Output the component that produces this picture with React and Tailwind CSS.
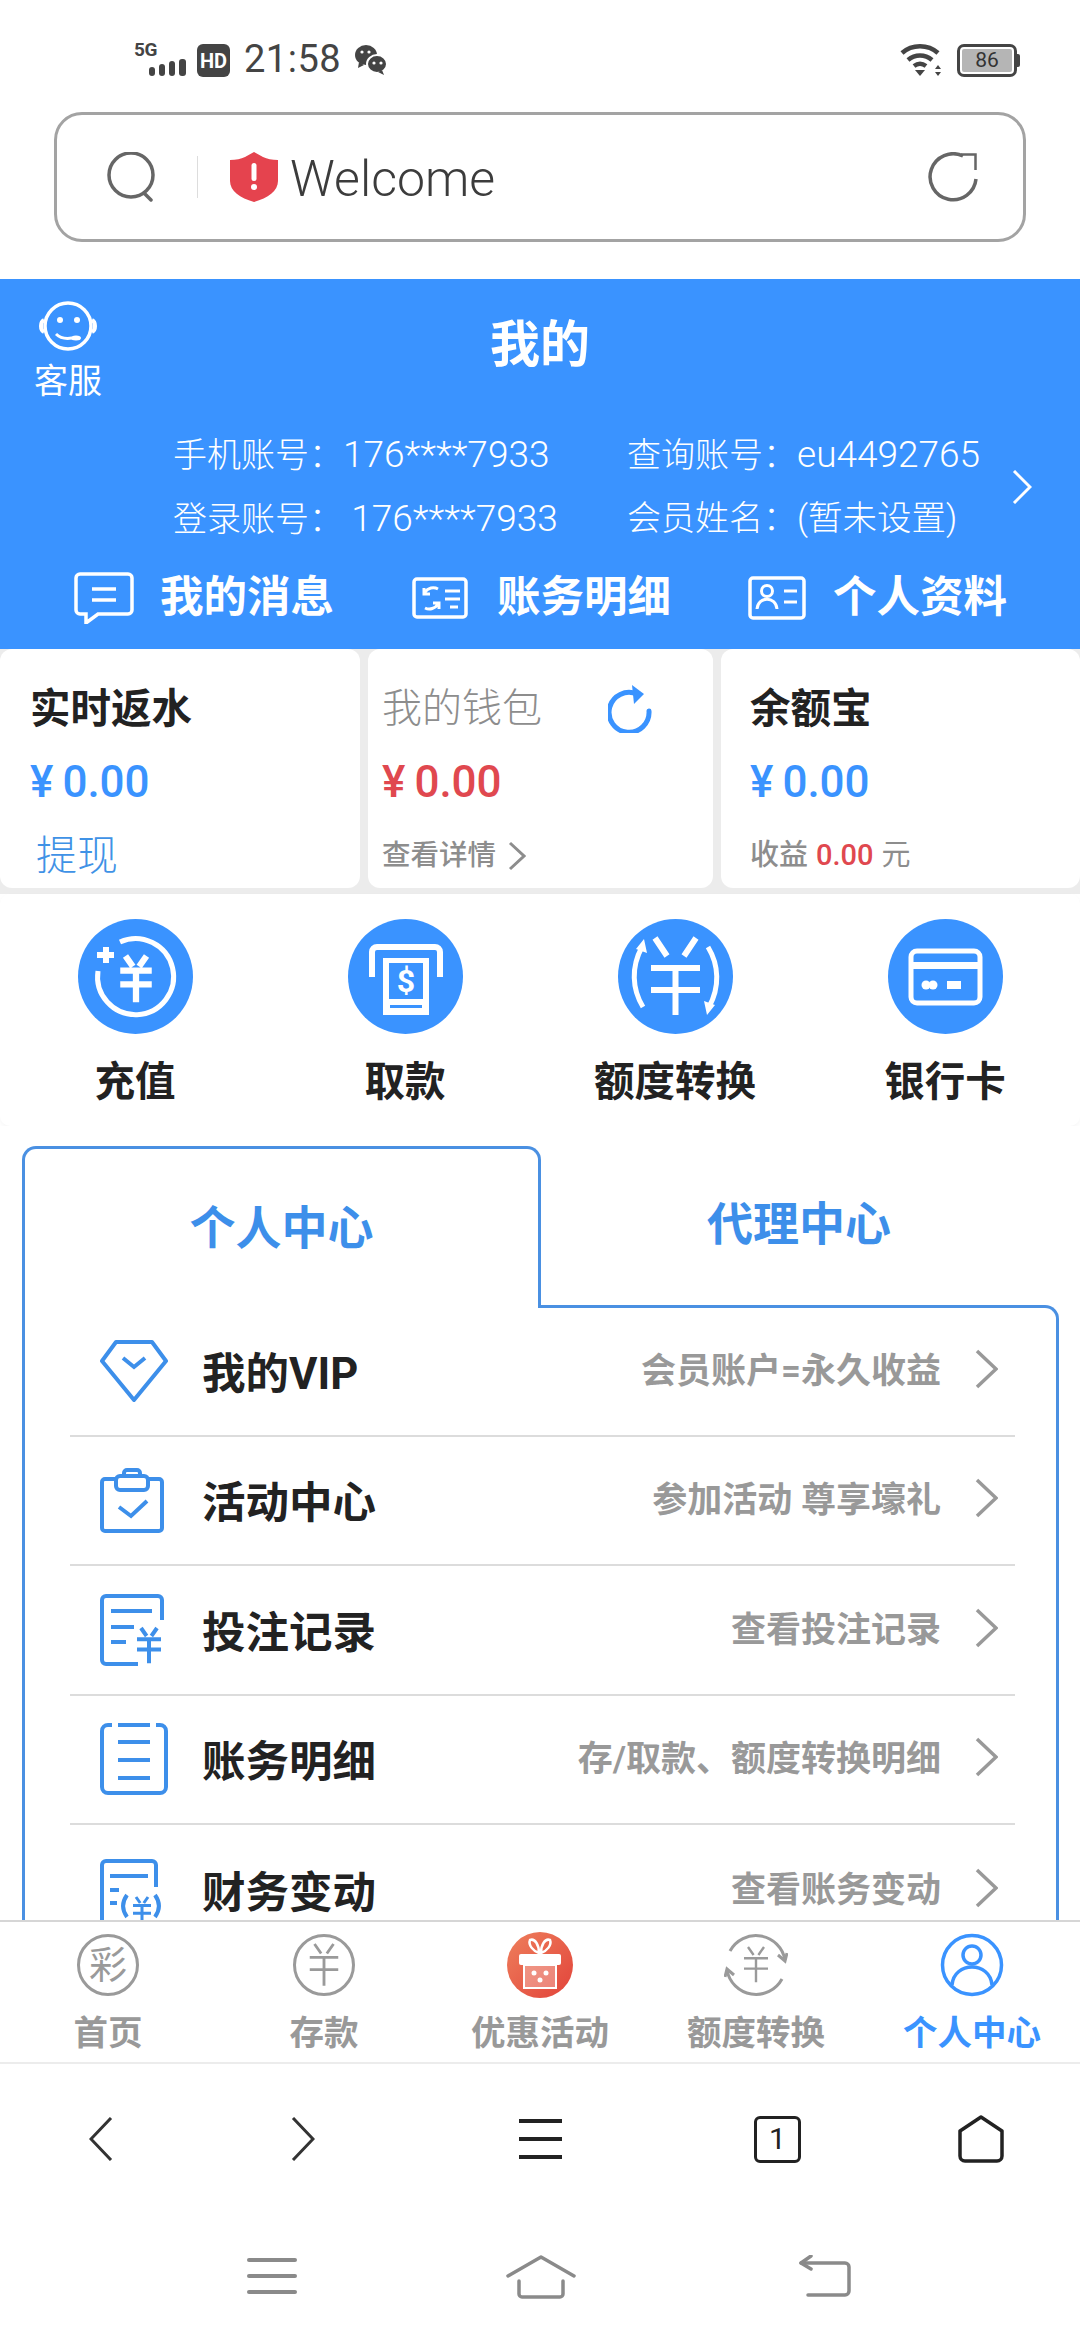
import React from 'react';

function StatusBar() {
  return (
    <div className="h-[112px] pt-[44px] flex items-start text-[#444]">
      {/* signal */}
      <div className="ml-[134px] w-[55px] h-[33px] relative">
        <span className="absolute left-0 -top-[6px] text-[19px] font-bold leading-[24px] tracking-[-0.5px]">5G</span>
        <svg width="40" height="17" viewBox="0 0 40 17" className="absolute left-[15px] top-[15px]" fill="#444">
          <rect x="0" y="8" width="6" height="9" rx="3" />
          <rect x="10" y="5" width="6" height="12" rx="3" />
          <rect x="20" y="2" width="6" height="15" rx="3" />
          <rect x="30" y="0" width="7" height="17" rx="3" />
        </svg>
      </div>
      <div className="ml-[8px] w-[33px] h-[33px] rounded-[6px] bg-[#444] text-white text-[20px] font-bold flex items-center justify-center leading-none">HD</div>
      <div className="ml-[14px] text-[38px] leading-[30px] tracking-[0.5px] font-normal">21:58</div>
      <svg width="34" height="32" viewBox="0 0 34 32" className="ml-[13px]" fill="#444">
        <ellipse cx="12" cy="11" rx="11" ry="10" />
        <path d="M5 18l-1 6 6-3z" />
        <ellipse cx="23" cy="20" rx="10" ry="9" stroke="#fff" strokeWidth="2" />
        <path d="M28 26l2 5-6-3z" />
        <circle cx="8" cy="8" r="1.6" fill="#fff" />
        <circle cx="15" cy="8" r="1.6" fill="#fff" />
        <circle cx="20" cy="19" r="1.6" fill="#fff" />
        <circle cx="27" cy="19" r="1.6" fill="#fff" />
      </svg>
      <div className="flex-1" />
      <svg width="44" height="32" viewBox="0 0 44 32" fill="none" stroke="#444" strokeWidth="4.5">
        <path d="M2 9c10-9 26-9 36 0" />
        <path d="M8 16c7-6 17-6 24 0" />
        <path d="M14 22c4-3 8-3 12 0" />
        <path d="M20 32l-5-6h10z" fill="#444" stroke="none" />
        <path d="M38 21l3 4h-6zM38 32l3-4h-6z" fill="#444" stroke="none" />
      </svg>
      <div className="ml-[13px] mr-[60px] flex items-center">
        <div className="w-[60px] h-[33px] rounded-[7px] border-[3px] border-[#444] p-[2px]">
          <div className="h-full bg-[#b5b5b5] rounded-[2px] text-[21px] leading-[23px] text-center text-[#333]">86</div>
        </div>
        <div className="w-[3px] h-[13px] bg-[#444] rounded-r-[2px]" />
      </div>
    </div>
  );
}

function SearchBar() {
  return (
    <div className="h-[167px] px-[54px] pb-[37px]">
      <div className="h-full rounded-[28px] border-[3.5px] border-[#a3a3a3] flex items-center pl-[49px] pr-[45px]">
        <svg width="52" height="50" viewBox="0 0 52 50" fill="none" stroke="#666" strokeWidth="3.5" strokeLinecap="round">
          <circle cx="25" cy="23" r="22" />
          <path d="M38 41l7 7" />
        </svg>
        <div className="ml-[39px] w-px h-[42px] bg-[#ddd]" />
        <svg width="48" height="50" viewBox="0 0 48 50" className="ml-[32px]">
          <path d="M24 0l9 5c4 2 9 3 15 3v21c0 10-10 17-24 21C10 46 0 39 0 29V8c6 0 11-1 15-3z" fill="#e5434e" />
          <rect x="21.5" y="11" width="5" height="18" rx="2.5" fill="#fff" />
          <circle cx="24" cy="35" r="3" fill="#fff" />
        </svg>
        <span className="ml-[12px] mt-[4px] text-[50px] leading-none font-light text-[#3c3c3c]">Welcome</span>
        <div className="flex-1" />
        <svg width="50" height="50" viewBox="0 0 50 50" fill="none" stroke="#666" strokeWidth="3.5">
          <path d="M35 4A23 23 0 1 0 48 27" />
          <path d="M33 2.5h14.5V18" strokeWidth="2.5" />
        </svg>
      </div>
    </div>
  );
}

const accountInfo = [
  { label: '手机账号：', value: '176****7933' },
  { label: '查询账号：', value: 'eu4492765' },
  { label: '登录账号： ', value: '176****7933' },
  { label: '会员姓名：', value: '(暂未设置)', cjk: true },
];

function Header() {
  return (
    <div className="h-[370px] bg-[#3a93ff] text-white shrink-0">
      <div className="h-[150px] flex items-start">
        <div className="w-[136px] pt-[22px] flex flex-col items-center">
          <svg width="58" height="50" viewBox="0 0 58 50" fill="none" stroke="#fff" strokeWidth="3.5">
            <circle cx="29" cy="25" r="23" />
            <path d="M5 19c-4 2-4 10 0 12M53 19c4 2 4 10 0 12" strokeWidth="4" />
            <circle cx="21" cy="19" r="3" fill="#fff" stroke="none" />
            <circle cx="38" cy="19" r="3" fill="#fff" stroke="none" />
            <path d="M17 33c4 4 10 5 16 4" strokeWidth="3" />
            <ellipse cx="37" cy="37" rx="5" ry="2.5" fill="#fff" stroke="none" />
          </svg>
          <span className="mt-[8px] text-[34px] leading-[44px]">客服</span>
        </div>
        <div className="flex-1 pt-[38px] text-center text-[50px] leading-[56px] font-bold">我的</div>
        <div className="w-[136px]" />
      </div>
      <div className="flex items-center h-[104px] mt-[6px] pl-[173px]">
        <div className="grid grid-cols-[454px_auto] gap-y-[22px] text-[34px] leading-[41px] font-light w-[830px]">
          {accountInfo.map((item) => (
            <div key={item.label} className="whitespace-pre">
              {item.label}
              <span className={item.cjk ? 'text-[34.5px]' : 'text-[37px]'}>{item.value}</span>
            </div>
          ))}
        </div>
        <svg width="20" height="34" viewBox="0 0 20 34" className="ml-[9px]" fill="none" stroke="#fff" strokeWidth="3">
          <path d="M2 1l16 16L2 33" />
        </svg>
      </div>
      <div className="mt-[31px] flex items-center font-bold text-[43.5px] leading-[56px]">
        <svg width="60" height="52" viewBox="0 0 60 52" className="ml-[74px]" fill="none" stroke="#fff" strokeWidth="3.5">
          <path d="M6 2h48a4 4 0 0 1 4 4v32a4 4 0 0 1-4 4H24L12 51v-9H6a4 4 0 0 1-4-4V6a4 4 0 0 1 4-4z" />
          <path d="M18 17h24M18 28h24" />
        </svg>
        <span className="ml-[26px]">我的消息</span>
        <svg width="56" height="42" viewBox="0 0 56 42" className="ml-[78px]" fill="none" stroke="#fff" strokeWidth="3.5">
          <rect x="2" y="2" width="52" height="38" rx="3" />
          <path d="M26 12a10 10 0 0 0-13 3M13 31a10 10 0 0 0 13-4M12 11v6h6M27 32v-6h-6" strokeWidth="3" />
          <path d="M33 14h15M33 22h15M38 30h8" strokeWidth="3" />
        </svg>
        <span className="ml-[29px]">账务明细</span>
        <svg width="58" height="44" viewBox="0 0 58 44" className="ml-[77px]" fill="none" stroke="#fff" strokeWidth="3.5">
          <rect x="2" y="2" width="54" height="40" rx="3" />
          <circle cx="19" cy="15" r="5.5" strokeWidth="3" />
          <path d="M9 33c1-13 19-13 20 0" strokeWidth="3" />
          <path d="M36 15h13M36 26h13" strokeWidth="3" />
        </svg>
        <span className="ml-[27px]">个人资料</span>
      </div>
    </div>
  );
}

function Chevron({ w = 18, h = 30, color = '#999', sw = 3, className = '' }) {
  return (
    <svg width={w} height={h} viewBox={`0 0 ${w} ${h}`} fill="none" stroke={color} strokeWidth={sw} className={className}>
      <path d={`M2 2L${w - 2} ${h / 2}L2 ${h - 2}`} />
    </svg>
  );
}

function Amount({ color }) {
  return (
    <div className={`mt-[22px] h-[50px] flex text-[44px] leading-[50px] font-medium ${color}`}>
      <span className="mr-[9px]">¥</span>
      <span>0.00</span>
    </div>
  );
}

function WalletCards() {
  return (
    <div className="bg-[#ececec] shrink-0 h-[245px] pb-[6px] flex gap-[8px]">
      <div className="w-[360px] bg-white rounded-[12px] pl-[30px] flex flex-col">
        <div className="mt-[34px] h-[52px] text-[40.5px] leading-[52px] font-bold text-[#222]">实时返水</div>
        <Amount color="text-[#3a93ff]" />
        <div className="mt-[24px] ml-[6px] text-[41px] leading-[50px] text-[#3f92e6] font-light">提现</div>
      </div>
      <div className="w-[345px] bg-white rounded-[12px] pl-[14px] flex flex-col">
        <div className="mt-[34px] h-[52px] flex items-center">
          <span className="w-[162px] text-[40px] leading-[52px] font-light text-[#8d8d8d]">我的钱包</span>
          <svg width="44" height="48" viewBox="0 0 44 48" className="ml-[64px]" fill="none" stroke="#3a93ff" strokeWidth="5">
            <path d="M29 9A20 20 0 1 0 41 26" strokeLinecap="round" />
            <path d="M24 0l12 9-10 10z" fill="#3a93ff" stroke="none" />
          </svg>
        </div>
        <Amount color="text-[#e0484f]" />
        <div className="mt-[24px] h-[50px] flex items-center">
          <span className="text-[28.5px] font-medium text-[#8d8d8d]">查看详情</span>
          <Chevron w={18} h={30} className="ml-[12px]" color="#8d8d8d" />
        </div>
      </div>
      <div className="flex-1 bg-white rounded-[12px] pl-[29px] flex flex-col">
        <div className="mt-[34px] h-[52px] text-[40.5px] leading-[52px] font-bold text-[#222]">余额宝</div>
        <Amount color="text-[#3a93ff]" />
        <div className="mt-[24px] h-[50px] flex items-center text-[29px] text-[#8d8d8d]">
          <span className="font-medium">收益</span>
          <span className="ml-[8px] font-medium text-[#e0484f]">0.00</span>
          <span className="ml-[8px]">元</span>
        </div>
      </div>
    </div>
  );
}

function YenMark({ x, y, s = 1, sw = 4, color = '#fff' }) {
  return (
    <path
      transform={`translate(${x} ${y}) scale(${s})`}
      d="M-10 -20L-3 -10M10 -20L3 -10M-15 -6H15M-15 7H15M0 -6V24"
      fill="none"
      stroke={color}
      strokeWidth={sw}
    />
  );
}

function ActionIcon({ type }) {
  return (
    <svg width="115" height="115" viewBox="0 0 115 115">
      <circle cx="57.5" cy="57.5" r="57.5" fill="#3a93ff" />
      {type === 'deposit' && (
        <g fill="none" stroke="#fff" strokeWidth="5">
          <path d="M42 23A38 38 0 1 1 20 52" />
          <path d="M19 36h17M28 28v16" strokeWidth="6" />
          <YenMark x={58} y={58} s={1.05} sw={6} />
        </g>
      )}
      {type === 'withdraw' && (
        <g>
          <path d="M24 58V33a5 5 0 0 1 5-5h58a5 5 0 0 1 5 5v25" fill="none" stroke="#fff" strokeWidth="6" />
          <rect x="35" y="39" width="46" height="57" fill="#fff" />
          <rect x="41" y="44" width="34" height="36" fill="#3a93ff" />
          <text x="58" y="73" textAnchor="middle" fontSize="32" fontWeight="700" fill="#fff" fontFamily="Roboto, sans-serif">$</text>
          <rect x="42" y="86" width="32" height="3" fill="#3a93ff" />
        </g>
      )}
      {type === 'transfer' && (
        <g fill="none" stroke="#fff" strokeWidth="5">
          <path d="M37 19L49 37M78 19L66 37M33 49H82M33 71H82M57.5 49V96" strokeWidth="6" />
          <path d="M24 28C13 48 14 70 25 88" />
          <path d="M91 88C102 68 101 46 90 28" />
          <path d="M26 20l3 14-11-4zM89 96l-3-14 11 4z" fill="#fff" stroke="none" />
        </g>
      )}
      {type === 'card' && (
        <g>
          <rect x="23" y="32" width="69" height="52" rx="6" fill="none" stroke="#fff" strokeWidth="5" />
          <rect x="25" y="43" width="65" height="7" fill="#fff" />
          <circle cx="38" cy="66" r="4.5" fill="#fff" />
          <circle cx="45" cy="66" r="4.5" fill="#fff" />
          <rect x="59" y="62" width="14" height="8" fill="#fff" />
        </g>
      )}
    </svg>
  );
}

const actions = [
  { type: 'deposit', label: '充值' },
  { type: 'withdraw', label: '取款' },
  { type: 'transfer', label: '额度转换' },
  { type: 'card', label: '银行卡' },
];

function Actions() {
  return (
    <div className="bg-white shrink-0 h-[232px] pt-[25px] grid grid-cols-4 rounded-[10px] shadow-[0_2px_4px_rgba(0,0,0,0.04)]">
      {actions.map((a) => (
        <div key={a.type} className="flex flex-col items-center">
          <ActionIcon type={a.type} />
          <span className="mt-[22px] text-[40.5px] leading-[52px] font-bold text-[#222]">{a.label}</span>
        </div>
      ))}
    </div>
  );
}

function RowIcon({ type }) {
  const p = { fill: 'none', stroke: '#3d8fea', strokeWidth: 4 };
  if (type === 'vip') {
    return (
      <svg width="68" height="64" viewBox="0 0 68 64" {...p}>
        <path d="M16 3h36l14 19-32 39L2 22z" strokeLinejoin="round" />
        <path d="M23 19l11 9 11-9" />
      </svg>
    );
  }
  if (type === 'activity') {
    return (
      <svg width="64" height="66" viewBox="0 0 64 66" {...p}>
        <path d="M15 12H5a3 3 0 0 0-3 3v46a3 3 0 0 0 3 3h54a3 3 0 0 0 3-3V15a3 3 0 0 0-3-3H49" />
        <rect x="16" y="9" width="32" height="14" rx="4" />
        <path d="M24 9V6a3 3 0 0 1 3-3h10a3 3 0 0 1 3 3v3" />
        <path d="M19 40l12 9 16-15" />
      </svg>
    );
  }
  if (type === 'bet') {
    return (
      <svg width="64" height="72" viewBox="0 0 64 72" {...p}>
        <path d="M38 70H6a4 4 0 0 1-4-4V6a4 4 0 0 1 4-4h52a4 4 0 0 1 4 4v20" />
        <path d="M11 17h41M11 33h23M11 48h15" />
        <YenMark x={49} y={50} s={0.8} sw={5} color="#3d8fea" />
      </svg>
    );
  }
  if (type === 'bill') {
    return (
      <svg width="68" height="72" viewBox="0 0 68 72" {...p}>
        <path d="M12 2H8a6 6 0 0 0-6 6v56a6 6 0 0 0 6 6h52a6 6 0 0 0 6-6V8a6 6 0 0 0-6-6h-4" />
        <path d="M18 2h32M18 19h32M18 37h32M18 55h32" />
      </svg>
    );
  }
  return (
    <svg width="62" height="62" viewBox="0 0 62 62" {...p} className="overflow-visible">
      <path d="M2 62V6a4 4 0 0 1 4-4h46a4 4 0 0 1 4 4v22" />
      <path d="M10 17h38M10 31h9M10 44h7" />
      <YenMark x={42} y={50} s={0.6} sw={5} color="#3d8fea" />
      <path d="M27 36c-5 7-5 15 0 22M55 36c5 7 5 15 0 22" />
    </svg>
  );
}

const rows = [
  { type: 'vip', title: '我的VIP', sub: '会员账户=永久收益' },
  { type: 'activity', title: '活动中心', sub: '参加活动 尊享壕礼' },
  { type: 'bet', title: '投注记录', sub: '查看投注记录' },
  { type: 'bill', title: '账务明细', sub: '存/取款、额度转换明细' },
  { type: 'change', title: '财务变动', sub: '查看账务变动' },
];

function CenterTabs() {
  return (
    <div className="flex-1 min-h-0 overflow-hidden bg-white pt-[20px]">
      <div className="flex pl-[22px]">
        <div className="relative z-10 w-[519px] h-[162px] -mb-[3px] bg-white border-[3px] border-b-0 border-[#4a90e2] rounded-t-[14px] pt-[54px] text-center text-[46px] leading-[50px] font-bold text-[#3d8fea]">
          个人中心
        </div>
        <div className="w-[516px] pt-[53px] text-center text-[46px] leading-[50px] font-bold text-[#3d8fea]">代理中心</div>
      </div>
      <div className="ml-[22px] w-[1037px] border-[3px] border-b-0 border-[#4a90e2] rounded-tr-[14px] pl-[45px] pr-[41px]">
        <div className="-mt-[1px]">
          {rows.map((r, i) => (
            <div key={r.type} className={`h-[129.5px] flex items-center ${i < rows.length - 1 ? 'border-b-2 border-[#dcdcdc]' : ''}`}>
              <div className="w-[132px] pl-[30px] h-[72px] flex items-center">
                <RowIcon type={r.type} />
              </div>
              <span className="mt-[8px] text-[43.5px] leading-[56px] font-bold text-[#222]">{r.title}</span>
              <span className="mt-[2px] flex-1 text-right text-[35px] leading-[44px] font-semibold text-[#999]">{r.sub}</span>
              <Chevron w={23} h={40} sw={3.5} className="ml-[34px] mr-[17px] mb-[4px]" />
            </div>
          ))}
        </div>
      </div>
    </div>
  );
}

function NavIcon({ type }) {
  if (type === 'gift') {
    return (
      <svg width="66" height="66" viewBox="0 0 66 66">
        <defs>
          <linearGradient id="giftBg" x1="0" y1="0" x2="1" y2="1">
            <stop offset="0" stopColor="#ee7f5c" />
            <stop offset="1" stopColor="#e2433a" />
          </linearGradient>
        </defs>
        <circle cx="33" cy="33" r="33" fill="url(#giftBg)" />
        <path d="M32 21c-6-2-11-8-9-13 5-2 9 5 9 13zM34 21c6-2 11-8 9-13-5-2-9 5-9 13z" fill="none" stroke="#fff" strokeWidth="2.5" />
        <rect x="12" y="22" width="42" height="11" rx="2" fill="#fff" />
        <rect x="17" y="33" width="32" height="23" fill="#fff" fillOpacity="0.3" stroke="#fff" strokeWidth="2" />
        <circle cx="27" cy="41" r="2.5" fill="#fff" />
        <circle cx="39" cy="41" r="2.5" fill="#fff" />
        <circle cx="33" cy="48" r="2.5" fill="#fff" />
      </svg>
    );
  }
  if (type === 'user') {
    return (
      <svg width="64" height="64" viewBox="0 0 64 64" fill="none" stroke="#3a93ff" strokeWidth="3.5">
        <circle cx="32" cy="32" r="29.5" />
        <circle cx="32" cy="22" r="9" />
        <path d="M12 52c2-24 38-24 40 0" />
      </svg>
    );
  }
  return (
    <svg width="64" height="64" viewBox="0 0 64 64" fill="none" stroke="#9a9a9a" strokeWidth="3">
      {type === 'swap' ? (
        <g>
          <path d="M6 18A29.5 29.5 0 0 1 61 27M58 46A29.5 29.5 0 0 1 3 37" />
          <path d="M54 22l7 6 2-8M10 42l-7-6-2 8" />
        </g>
      ) : (
        <circle cx="32" cy="32" r="29.5" />
      )}
      {type === 'lottery' ? (
        <text x="32" y="45" textAnchor="middle" fontSize="38" fill="#9a9a9a" stroke="none" fontFamily="'Noto Sans CJK SC', sans-serif">彩</text>
      ) : (
        <YenMark x={32} y={30} s={type === 'swap' ? 0.8 : 0.95} sw={3} color="#9a9a9a" />
      )}
    </svg>
  );
}

const navItems = [
  { type: 'lottery', label: '首页' },
  { type: 'yen', label: '存款' },
  { type: 'gift', label: '优惠活动' },
  { type: 'swap', label: '额度转换' },
  { type: 'user', label: '个人中心', active: true },
];

function BottomNav() {
  return (
    <div className="shrink-0 h-[144px] bg-white border-t-2 border-b-2 border-t-[#d6d6d6] border-b-[#ececec] grid grid-cols-5">
      {navItems.map((n) => (
        <div key={n.type} className="flex flex-col items-center pt-[9px]">
          <div className="h-[68px] flex items-center">
            <NavIcon type={n.type} />
          </div>
          <span className={`mt-[12px] text-[34.5px] leading-[44px] font-semibold ${n.active ? 'text-[#3a93ff]' : 'text-[#999]'}`}>{n.label}</span>
        </div>
      ))}
    </div>
  );
}

function BrowserBar() {
  return (
    <div className="shrink-0 h-[150px] flex items-center">
      <svg width="24" height="44" viewBox="0 0 24 44" className="ml-[89px]" fill="none" stroke="#333" strokeWidth="3">
        <path d="M22 1L2 22l20 21" />
      </svg>
      <svg width="24" height="44" viewBox="0 0 24 44" className="ml-[178px]" fill="none" stroke="#333" strokeWidth="3">
        <path d="M2 1l20 21L2 43" />
      </svg>
      <div className="ml-[204px] w-[43px] flex flex-col gap-[14px]">
        <div className="h-[4px] bg-[#222]" />
        <div className="h-[4px] bg-[#222]" />
        <div className="h-[4px] bg-[#222]" />
      </div>
      <div className="ml-[192px] w-[47px] h-[47px] rounded-[6px] border-[3.5px] border-[#222] flex items-center justify-center text-[30px] font-normal leading-none text-[#222]">1</div>
      <svg width="46" height="48" viewBox="0 0 46 48" className="ml-[157px]" fill="none" stroke="#222" strokeWidth="3.5" strokeLinejoin="round">
        <path d="M23 2L44 16v25a5 5 0 0 1-5 5H7a5 5 0 0 1-5-5V16z" />
      </svg>
    </div>
  );
}

function SystemBar() {
  return (
    <div className="shrink-0 h-[126px] flex items-start pt-[41px]">
      <div className="ml-[247px] mt-[3px] w-[50px] flex flex-col gap-[12px]">
        <div className="h-[4px] rounded-full bg-[#8a8a8a]" />
        <div className="h-[4px] rounded-full bg-[#8a8a8a]" />
        <div className="h-[4px] rounded-full bg-[#8a8a8a]" />
      </div>
      <svg width="70" height="44" viewBox="0 0 70 44" className="ml-[209px]" fill="none" stroke="#8a8a8a" strokeWidth="3.5" strokeLinecap="round" strokeLinejoin="round">
        <path d="M2 21L35 2l33 19" />
        <path d="M13 26v13a3 3 0 0 0 3 3h38a3 3 0 0 0 3-3V26" />
      </svg>
      <svg width="54" height="42" viewBox="0 0 54 42" className="ml-[223px]" fill="none" stroke="#8a8a8a" strokeWidth="3.5" strokeLinecap="round" strokeLinejoin="round">
        <path d="M2 8h44a4 4 0 0 1 4 4v24a4 4 0 0 1-4 4H9" />
        <path d="M12 1L2 8l10 6" />
      </svg>
    </div>
  );
}

export default function App() {
  return (
    <div className="w-[1080px] h-[2340px] overflow-hidden bg-white flex flex-col font-['Roboto','Noto_Sans_CJK_SC',sans-serif]">
      <StatusBar />
      <SearchBar />
      <Header />
      <WalletCards />
      <Actions />
      <CenterTabs />
      <BottomNav />
      <BrowserBar />
      <SystemBar />
    </div>
  );
}
